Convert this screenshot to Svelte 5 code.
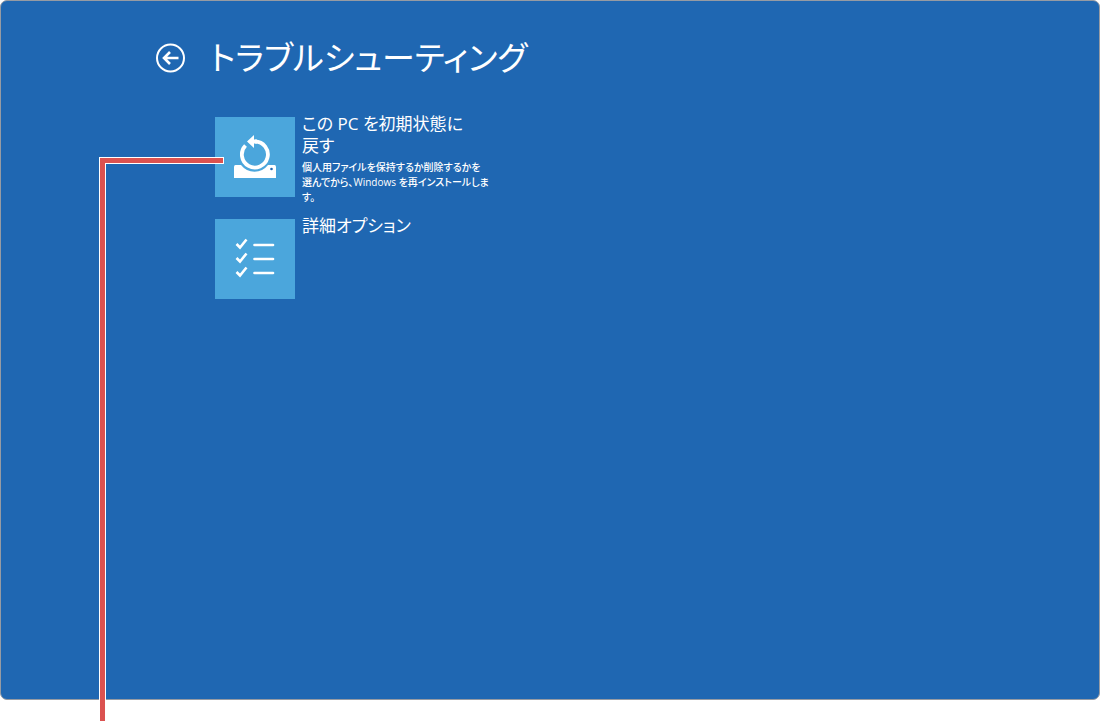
<script lang="ts">
  type Option = {
    id: "reset" | "advanced";
    title: string;
    description?: string[];
  };

  const options: Option[] = [
    {
      id: "reset",
      title: "この PC を初期状態に戻す",
      description: [
        "個人用ファイルを保持するか削除するかを",
        "選んでから、Windows を再インストールしま",
        "す。",
      ],
    },
    { id: "advanced", title: "詳細オプション" },
  ];
</script>

<div class="page">
  <main class="screen">
    <header class="heading">
      <button type="button" class="back" aria-label="戻る">
        <svg viewBox="0 0 30 30" fill="none" stroke="currentColor" stroke-width="2">
          <circle cx="14.500" cy="15" r="13.500" />
          <path d="M22.500 15H8.500M14 9l-6 6 6 6" stroke-width="2.600" />
        </svg>
      </button>
      <h1>トラブルシューティング</h1>
    </header>

    <div class="options">
      {#each options as option (option.id)}
        <button type="button" class="option">
          <span class="tile">
            {#if option.id === "reset"}
              <svg viewBox="0 0 80 80">
                <path
                  d="M20.500 48H26a17 17 0 0 0 27 0h6.500q1.500 0 1.500 2v11H19V50q0-2 1.500-2z"
                  fill="#fff"
                />
                <circle cx="56.500" cy="52" r="1.300" fill="#1f67b2" />
                <path
                  d="M30.500 28.500A13 13 0 1 0 40 24.500"
                  fill="none"
                  stroke="#fff"
                  stroke-width="3.800"
                />
                <path d="M32 24.500l7-6.500v4.500h3v4h-3V31z" fill="#fff" />
              </svg>
            {:else}
              <svg viewBox="0 0 80 80" fill="none" stroke="#fff">
                {#each [25, 39, 53] as y}
                  <path d="M21.500 {y}l3.500 3.500 6.500-8" stroke-width="2.600" />
                  <path d="M39.500 {y + 1}h18.500" stroke-width="2.600" stroke-linecap="round" />
                {/each}
              </svg>
            {/if}
          </span>
          <span class="text">
            <span class="title">{option.title}</span>
            {#if option.description}
              <span class="description">
                {#each option.description as line}
                  <span>{line}</span>
                {/each}
              </span>
            {/if}
          </span>
        </button>
      {/each}
    </div>
  </main>

  <div class="callout" aria-hidden="true"></div>
</div>

<style>
  :global(body) {
    margin: 0;
    background: #fff;
  }

  .page {
    position: relative;
    display: flex;
    flex-direction: column;
    box-sizing: border-box;
    min-height: 100vh;
    padding-bottom: 21px;
    color: #fff;
    font-family: "Open Sans", "Noto Sans CJK JP", sans-serif;
    font-feature-settings: "palt";
  }

  .screen {
    flex: 1;
    padding: 33px 155px 40px;
    border: 1px solid #969ba3;
    border-radius: 7px;
    background: #1f67b2;
  }

  .heading {
    display: flex;
    align-items: center;
    gap: 24px;
  }

  h1 {
    margin: 0;
    font-size: 33px;
    font-weight: 400;
    line-height: 48px;
  }

  button {
    padding: 0;
    border: 0;
    background: none;
    color: inherit;
    font: inherit;
    font-feature-settings: inherit;
    text-align: left;
    cursor: pointer;
  }

  .back {
    width: 30px;
    height: 30px;
  }

  svg {
    display: block;
    width: 100%;
    height: 100%;
  }

  .options {
    display: grid;
    justify-items: start;
    gap: 10px;
    margin: 31px 0 0 59px;
  }

  .option {
    display: flex;
    align-items: flex-start;
    gap: 7px;
  }

  .tile {
    flex: none;
    width: 80px;
    height: 80px;
    margin-top: 4px;
    background: #4ba6dc;
  }

  .text {
    display: grid;
    grid-template-columns: minmax(0, 1fr);
    width: 172px;
  }

  .title {
    font-size: 17px;
    line-height: 22px;
  }

  .description {
    display: grid;
    margin-top: 3px;
    font-size: 10px;
    font-weight: 500;
    line-height: 15px;
    white-space: nowrap;
  }

  .callout {
    position: absolute;
    top: 158px;
    bottom: 0;
    left: 100px;
    width: 123px;
    pointer-events: none;
  }

  .callout::before,
  .callout::after {
    position: absolute;
    left: 0;
    background: #db5250;
    content: "";
  }

  .callout::before {
    top: 0;
    width: 100%;
    height: 5px;
    box-shadow: 0 0 0 1px #fff;
  }

  .callout::after {
    top: 5px;
    bottom: 0;
    width: 5px;
    box-shadow: -1px 0 #fff, 1px 0 #fff;
  }
</style>
